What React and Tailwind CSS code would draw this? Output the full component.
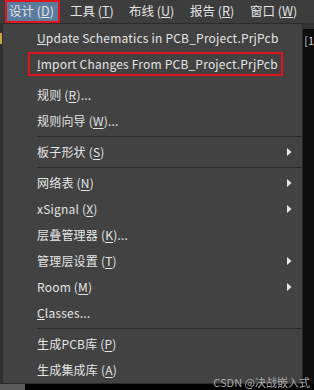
import React from 'react';

const FONT = { fontFamily: '"Noto Sans CJK SC", "Noto Sans", sans-serif' };

const topMenus = [
  { label: '工具', key: 'T', w: 'w-[59px]' },
  { label: '布线', key: 'U', w: 'w-[61px]' },
  { label: '报告', key: 'R', w: 'w-[60px]' },
  { label: '窗口', key: 'W', w: 'w-[60px]' },
];

function Arrow() {
  return (
    <svg width="5" height="8" viewBox="0 0 5 8" className="absolute right-[10px] top-1/2 -translate-y-1/2">
      <polygon points="0,0 4.5,4 0,8" fill="#e8e8e8" />
    </svg>
  );
}

function Key({ k }) {
  return (
    <>
      {' ('}
      <u className="underline-offset-[2px]">{k}</u>
      {')'}
    </>
  );
}

function Item({ label, k, dots, sub, h = 'h-[26px]', children }) {
  return (
    <div className={`relative flex items-center pl-[34px] ${h}`}>
      <span className="whitespace-nowrap tracking-[0.2px]">
        {children || (
          <>
            {label}
            <Key k={k} />
            {dots && '...'}
          </>
        )}
      </span>
      {sub && <Arrow />}
    </div>
  );
}

function Sep() {
  return (
    <div className="h-[5px] flex items-center pl-[34px]">
      <div className="h-px w-full bg-[#2a2a2a]" />
    </div>
  );
}

export default function App() {
  return (
    <div className="w-[314px] h-[390px] bg-black overflow-hidden text-[12px] text-[#e4e4e4] relative" style={FONT}>
      {/* menu bar */}
      <div className="h-[23px] bg-[#3d3d3d] flex items-center pl-[7px] text-[12.5px]">
        <div className="relative h-[19px] w-[51px] bg-[#5a7a9e] flex items-center pl-[2px] whitespace-nowrap">
          设计 (<u>D</u>)
          <div className="absolute -left-[2px] -top-[2px] w-[55px] h-[23px] border-2 border-[#e0161e]" />
        </div>
        <div className="w-[12px]" />
        {topMenus.map((m) => (
          <span key={m.key} className={`${m.w} whitespace-nowrap`}>
            {m.label} (<u>{m.key}</u>)
          </span>
        ))}
      </div>

      <div className="flex h-[361px]">
        {/* left strip */}
        <div className="w-[2px] bg-[#2f2f2f] flex flex-col">
          <div className="h-[10px]" />
          <div className="h-[11px] w-[2px] bg-[#c9a63a]" />
        </div>

        {/* dropdown */}
        <div className="w-[304px] h-[361px] bg-[#424242] border border-[#2b2b2b] pt-px">
          <Item>
            <u>U</u>pdate Schematics in PCB_Project.PrjPcb
          </Item>
          <Item h="h-[25px]">
            <span className="relative">
              <u>I</u>mport Changes From PCB_Project.PrjPcb
            </span>
            <span className="absolute left-[25px] top-[1px] w-[255px] h-[24px] border-2 border-[#e0161e]" />
          </Item>
          <div className="h-[6px]" />
          <Item label="规则" k="R" dots />
          <Item label="规则向导" k="W" dots />
          <Sep />
          <Item label="板子形状" k="S" sub />
          <Sep />
          <Item label="网络表" k="N" sub />
          <Item label="xSignal" k="X" sub />
          <Item label="层叠管理器" k="K" dots />
          <Item label="管理层设置" k="T" sub />
          <Item label="Room" k="M" sub />
          <Item>
            <u>C</u>lasses...
          </Item>
          <Sep />
          <Item label="生成PCB库" k="P" />
          <Item label="生成集成库" k="A" />
        </div>

        {/* right strip */}
        <div className="flex-1 bg-[#0c0c0c] flex flex-col">
          <div className="h-[6px] bg-[#333333]" />
          <div className="h-[5px]" />
          <div className="text-[11px] leading-[12px] text-[#cfcfcf] pl-[1px]">[1</div>
        </div>
      </div>

      {/* bottom */}
      <div className="flex h-[6px]">
        <div className="w-[25px] bg-[#5b5b5b]" />
        <div className="flex-1 bg-black" />
      </div>

      <div className="absolute right-[4px] bottom-[1px] text-[11px] leading-[14px] text-[#a8a8a8]">CSDN @决战嵌入式</div>
    </div>
  );
}
